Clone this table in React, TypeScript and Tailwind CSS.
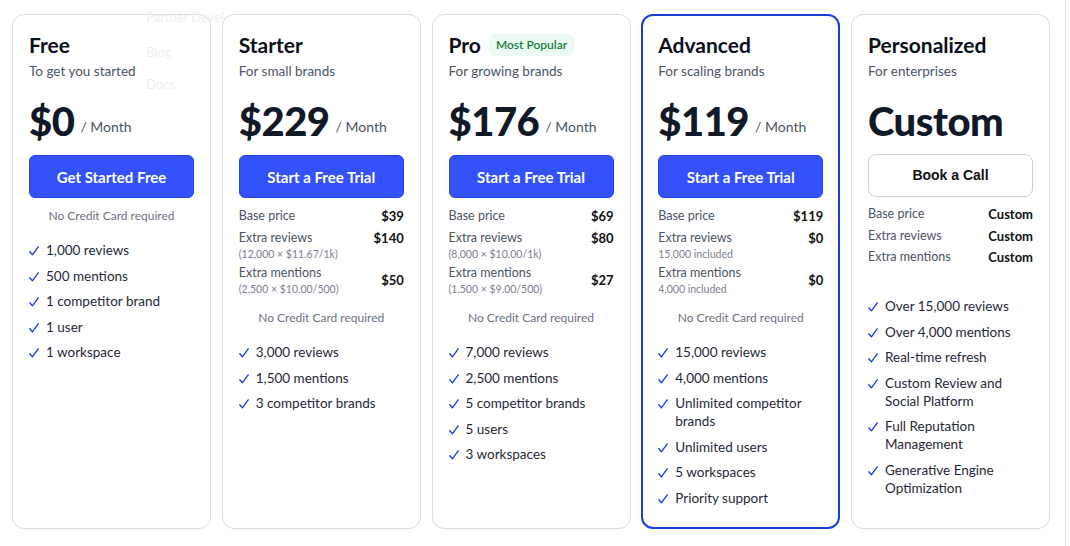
import React from "react";

type Row = { label: string; sub?: string; value: string };

type Plan = {
  name: string;
  tagline: string;
  price: string;
  cta: string;
  badge?: string;
  highlight?: boolean;
  custom?: boolean;
  rows?: Row[];
  note?: boolean;
  features: string[];
};

const plans: Plan[] = [
  {
    name: "Free",
    tagline: "To get you started",
    price: "$0",
    cta: "Get Started Free",
    note: true,
    features: ["1,000 reviews", "500 mentions", "1 competitor brand", "1 user", "1 workspace"],
  },
  {
    name: "Starter",
    tagline: "For small brands",
    price: "$229",
    cta: "Start a Free Trial",
    rows: [
      { label: "Base price", value: "$39" },
      { label: "Extra reviews", sub: "(12,000 × $11.67/1k)", value: "$140" },
      { label: "Extra mentions", sub: "(2,500 × $10.00/500)", value: "$50" },
    ],
    note: true,
    features: ["3,000 reviews", "1,500 mentions", "3 competitor brands"],
  },
  {
    name: "Pro",
    tagline: "For growing brands",
    price: "$176",
    cta: "Start a Free Trial",
    badge: "Most Popular",
    rows: [
      { label: "Base price", value: "$69" },
      { label: "Extra reviews", sub: "(8,000 × $10.00/1k)", value: "$80" },
      { label: "Extra mentions", sub: "(1,500 × $9.00/500)", value: "$27" },
    ],
    note: true,
    features: ["7,000 reviews", "2,500 mentions", "5 competitor brands", "5 users", "3 workspaces"],
  },
  {
    name: "Advanced",
    tagline: "For scaling brands",
    price: "$119",
    cta: "Start a Free Trial",
    highlight: true,
    rows: [
      { label: "Base price", value: "$119" },
      { label: "Extra reviews", sub: "15,000 included", value: "$0" },
      { label: "Extra mentions", sub: "4,000 included", value: "$0" },
    ],
    note: true,
    features: [
      "15,000 reviews",
      "4,000 mentions",
      "Unlimited competitor brands",
      "Unlimited users",
      "5 workspaces",
      "Priority support",
    ],
  },
  {
    name: "Personalized",
    tagline: "For enterprises",
    price: "Custom",
    cta: "Book a Call",
    custom: true,
    rows: [
      { label: "Base price", value: "Custom" },
      { label: "Extra reviews", value: "Custom" },
      { label: "Extra mentions", value: "Custom" },
    ],
    features: [
      "Over 15,000 reviews",
      "Over 4,000 mentions",
      "Real-time refresh",
      "Custom Review and Social Platform",
      "Full Reputation Management",
      "Generative Engine Optimization",
    ],
  },
];

function Check() {
  return (
    <svg width="10" height="10" viewBox="0 0 10 10" className="mt-[5px] shrink-0">
      <path d="M0.8 5.8 L3.4 8.8 L9.2 0.8" fill="none" stroke="#1a3be0" strokeWidth="1.3" strokeLinecap="round" strokeLinejoin="round" />
    </svg>
  );
}

function PlanCard({ plan }: { plan: Plan }) {
  return (
    <div
      className={
        plan.highlight
          ? "w-[199px] h-[515px] shrink-0 rounded-xl border-2 border-[#1a3fd8] bg-white p-[15px]"
          : "w-[199px] h-[515px] shrink-0 rounded-xl border border-[#dcdcdc] bg-white p-4"
      }
    >
      <div className="flex items-center gap-2 h-7">
        <h2 className="text-[21px] font-bold leading-7 text-[#0b0f1a]">{plan.name}</h2>
        {plan.badge && (
          <span className="rounded-md bg-[#ecfbf1] px-[7px] py-[3px] text-[12px] font-semibold leading-4 text-[#15803d]">
            {plan.badge}
          </span>
        )}
      </div>
      <p className="mt-0.5 text-[13.5px] leading-5 text-[#4b5563]">{plan.tagline}</p>

      <div className="mt-4 flex items-end gap-1.5 h-12">
        <span className="text-[40px] font-black leading-[48px] tracking-[-0.5px] text-[#111827]">{plan.price}</span>
        {!plan.custom && <span className="mb-2 text-[14px] leading-5 text-[#4b5563]">/ Month</span>}
      </div>

      {plan.custom ? (
        <button className="mt-[9px] h-[43px] w-full rounded-lg border border-[#cfcfcf] bg-white font-['Liberation_Sans',Arial,sans-serif] text-[14px] font-bold text-[#111]">
          {plan.cta}
        </button>
      ) : (
        <button className="mt-2.5 h-[43px] w-full rounded-md border border-[#2443e6] bg-[#3352fc] pt-[2px] text-[15px] font-bold text-white">
          {plan.cta}
        </button>
      )}

      {plan.rows && (
        <div className={plan.custom ? "mt-2 flex flex-col gap-[3.5px]" : "mt-[9px] flex flex-col gap-[3.5px]"}>
          {plan.rows.map((r) => (
            <div key={r.label} className="flex items-center justify-between">
              <div className="flex flex-col">
                <span className="text-[12.5px] leading-[18px] text-[#4b5563]">{r.label}</span>
                {r.sub && <span className="text-[10.5px] leading-[14px] text-[#7b8190]">{r.sub}</span>}
              </div>
              <span
                className={
                  r.sub && r.label === "Extra reviews"
                    ? "self-start text-[13px] font-bold leading-[18px] text-[#111]"
                    : "text-[13px] font-bold leading-[18px] text-[#111]"
                }
              >
                {r.value}
              </span>
            </div>
          ))}
        </div>
      )}

      {plan.note && (
        <p className={plan.rows ? "mt-[14px] text-center text-[12px] leading-4 text-[#6b7280]" : "mt-[10px] text-center text-[12px] leading-4 text-[#6b7280]"}>
          No Credit Card required
        </p>
      )}

      <ul className={plan.custom ? "mt-[31px] flex flex-col gap-[7.5px]" : "mt-[17px] flex flex-col gap-[7.5px]"}>
        {plan.features.map((f) => (
          <li key={f} className="flex items-start gap-[7px] text-[13.5px] leading-[18px] text-[#1f2937]">
            <Check />
            <span>{f}</span>
          </li>
        ))}
      </ul>
    </div>
  );
}

export default function App() {
  return (
    <div className="relative h-[546px] w-[1066px] border-r border-[#e6e6e6] bg-white font-['Lato','Noto_Sans',sans-serif]">
      <div className="flex gap-[10.75px] pl-3 pt-[14px]">
        {plans.map((p) => (
          <PlanCard key={p.name} plan={p} />
        ))}
      </div>

      {/* faded nav dropdown bleeding through */}
      <div className="pointer-events-none absolute left-[130px] top-0 w-[96px] overflow-hidden text-[13px] text-[#efefef]">
        <div className="flex h-[36px] items-center whitespace-nowrap pl-4">Partner Devel</div>
        <div className="flex h-[33px] items-center pl-4">Blog</div>
        <div className="flex h-[31px] items-center pl-4">Docs</div>
      </div>
    </div>
  );
}
